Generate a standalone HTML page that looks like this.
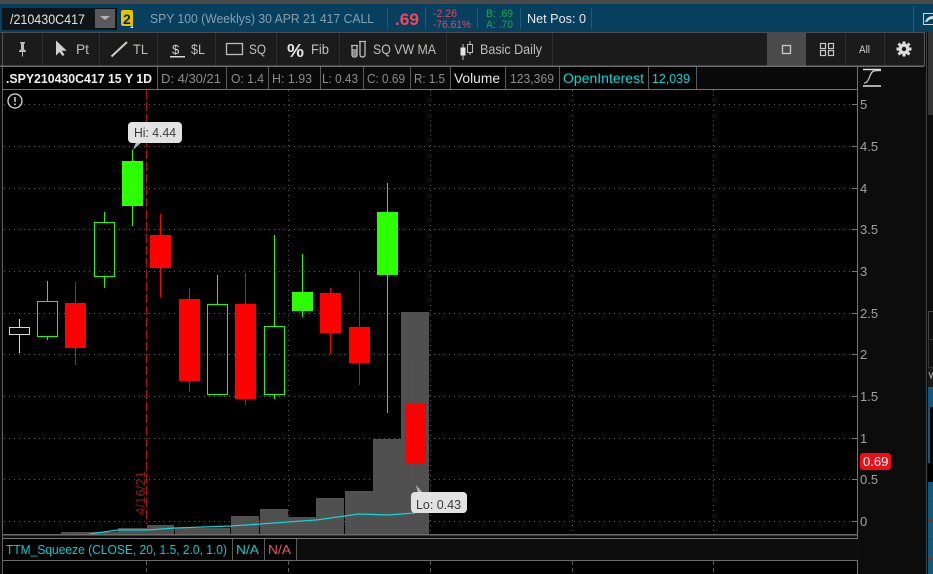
<!DOCTYPE html>
<html><head><meta charset="utf-8"><style>
html,body{margin:0;padding:0;background:#0c0c0c;width:933px;height:574px;overflow:hidden}
svg{display:block}
text{font-family:"Liberation Sans",sans-serif;font-size:12px}
</style></head><body>
<svg width="933" height="574" viewBox="0 0 933 574" xmlns="http://www.w3.org/2000/svg">
<rect width="933" height="574" fill="#0c0c0c"/>
<!-- top strip and blue bar -->
<rect width="933" height="4" fill="#4a4a4a"/>
<rect y="4" width="933" height="28" fill="#07405f"/>
<rect x="2" y="8" width="115" height="22" fill="#0e1418"/>
<text x="10" y="24" fill="#e2e2e2" style="font-size:13.500px" textLength="75" lengthAdjust="spacingAndGlyphs">/210430C417</text>
<rect x="95" y="9" width="20" height="19" fill="#5a5a5a"/>
<path d="M100 16h10l-5 4z" fill="#b5b5b5"/>
<rect x="121" y="10" width="12" height="16" rx="2" fill="#e3c400"/>
<text x="123" y="24" fill="#10202a" style="font-size:14px;font-weight:bold">2</text>
<path d="M130 28l3-3v3z" fill="#dcdcdc"/>
<text x="150" y="23" fill="#86a0b0" style="font-size:13px" textLength="224" lengthAdjust="spacingAndGlyphs">SPY 100 (Weeklys) 30 APR 21 417 CALL</text>
<g stroke="#1f5a7b" stroke-width="1"><path d="M387.500 8v21M425.500 8v21M477.500 8v21M520.500 8v21M591.500 8v21M913.500 6v26"/></g>
<text x="395" y="25" fill="#f0495b" style="font-size:17px;font-weight:bold" textLength="24" lengthAdjust="spacingAndGlyphs">.69</text>
<text x="433" y="17" fill="#e8445a" style="font-size:11px" textLength="24" lengthAdjust="spacingAndGlyphs">-2.26</text>
<text x="433" y="28" fill="#e8445a" style="font-size:11px" textLength="38" lengthAdjust="spacingAndGlyphs">-76.61%</text>
<text x="486" y="17" fill="#18a84a" style="font-size:11px" textLength="27" lengthAdjust="spacingAndGlyphs">B: .69</text>
<text x="486" y="28" fill="#18a84a" style="font-size:11px" textLength="27" lengthAdjust="spacingAndGlyphs">A: .70</text>
<text x="527" y="23" fill="#e8e8e8" style="font-size:13px" textLength="59" lengthAdjust="spacingAndGlyphs">Net Pos: 0</text>
<rect x="923.500" y="13.500" width="11" height="11" fill="none" stroke="#cfd8dd"/>
<path d="M925 22q2-6 8-6v3q-4 0-6 3z" fill="#cfd8dd"/>
<!-- toolbar -->
<rect x="0" y="32" width="924" height="34" fill="#1b1b1b"/>
<rect x="767" y="33" width="39" height="33" fill="#4b4b4b"/>
<path d="M0 32.500H924" stroke="#4c4c4c"/>
<path d="M2.500 32V66M924.500 32V66" stroke="#555"/>
<g stroke="#2e2e2e"><path d="M42.500 33V66M99.500 33V66M157.500 33V66M215.500 33V66M276.500 33V66M339.500 33V66M446.500 33V66M552.500 33V66M845.500 33V66M884.500 33V66"/></g>
<rect x="0" y="65.500" width="924" height="1.500" fill="#6d6d6d"/>
<!-- pin -->
<path d="M20 42h5v1l-1 1v5l2 2v1h-3v4l-.5 1-.5-1v-4h-3v-1l2-2v-5l-1-1z" fill="#bdbdbd"/>
<!-- arrow -->
<path d="M56 40.500v15l3.500-3.500 3 4 2-1.300-2.700-4h5z" fill="#cfcfcf"/>
<text x="76" y="54" fill="#bfbfbf" style="font-size:14px" textLength="13" lengthAdjust="spacingAndGlyphs">Pt</text>
<path d="M111.500 56.500L127 42" stroke="#cfcfcf" stroke-width="2"/>
<text x="133" y="54" fill="#bfbfbf" style="font-size:14px" textLength="15" lengthAdjust="spacingAndGlyphs">TL</text>
<text x="172" y="54" fill="#d0d0d0" style="font-size:13px">$</text>
<rect x="170" y="56" width="15" height="1.500" fill="#d8d8d8"/>
<text x="191" y="54" fill="#bfbfbf" style="font-size:14px" textLength="14" lengthAdjust="spacingAndGlyphs">$L</text>
<rect x="226.500" y="43.500" width="16" height="11" fill="none" stroke="#bdbdbd" stroke-width="1.300"/>
<text x="249" y="54" fill="#bfbfbf" style="font-size:14px" textLength="17" lengthAdjust="spacingAndGlyphs">SQ</text>
<text x="287" y="57" fill="#e6e6e6" style="font-size:18px;font-weight:bold" textLength="17" lengthAdjust="spacingAndGlyphs">%</text>
<text x="311" y="54" fill="#bfbfbf" style="font-size:14px" textLength="18" lengthAdjust="spacingAndGlyphs">Fib</text>
<!-- tubes -->
<g fill="none" stroke="#bdbdbd" stroke-width="1.300"><path d="M352 45.500v9q0 2.500 2.500 2.500t2.500-2.500v-9M351 45.500h7"/><path d="M360 41.500v13q0 2.500 2.500 2.500t2.500-2.500v-13M359 41.500h7"/></g>
<rect x="352.500" y="49" width="4" height="7" fill="#888"/>
<text x="373" y="54" fill="#bfbfbf" style="font-size:14px" textLength="63" lengthAdjust="spacingAndGlyphs">SQ VW MA</text>
<!-- basic candles -->
<path d="M463 44v16M470 41v14" stroke="#bdbdbd"/>
<rect x="460.500" y="47.500" width="5" height="8" fill="#e4e4e4"/>
<rect x="467.500" y="44.500" width="5" height="8" fill="#1b1b1b" stroke="#bdbdbd"/>
<text x="480" y="54" fill="#bfbfbf" style="font-size:14px" textLength="62" lengthAdjust="spacingAndGlyphs">Basic Daily</text>
<rect x="782.500" y="45.500" width="8" height="8" fill="none" stroke="#c8c8c8" stroke-width="1.300"/>
<g fill="none" stroke="#c8c8c8" stroke-width="1.200"><rect x="820.500" y="43.500" width="5" height="5"/><rect x="828.500" y="43.500" width="5" height="5"/><rect x="820.500" y="50.500" width="5" height="5"/><rect x="828.500" y="50.500" width="5" height="5"/></g>
<text x="859" y="53" fill="#cfcfcf" style="font-size:11px" textLength="11" lengthAdjust="spacingAndGlyphs">All</text>
<g fill="#dcdcdc"><circle cx="904" cy="49" r="5.500"/><path d="M902.500 41.500h3v4h-3zM902.500 52.500h3v4h-3zM896.500 47.500h4v3h-4zM907.500 47.500h4v3h-4z"/><path d="M897.500 44.500l2-2 3 3-2 2zM908.500 42.500l2 2-3 3-2-2zM899.500 55.500l-2-2 3-3 2 2zM910.500 53.500l-2 2-3-3 2-2z"/></g>
<circle cx="904" cy="49" r="2.200" fill="#1b1b1b"/>
<!-- info row -->
<rect x="3" y="67" width="855" height="22" fill="#0a0a0a"/>
<rect x="3" y="67" width="155" height="22" fill="#000"/>
<rect x="450" y="67" width="56" height="22" fill="#000"/>
<rect x="559" y="67" width="137" height="22" fill="#000"/>
<g stroke="#5a5a5a"><path d="M157.500 67V89M226.500 67V89M268.500 67V89M320.500 67V89M363.500 67V89M410.500 67V89M450.500 67V89M505.500 67V89M559.500 67V89M648.500 67V89M696.500 67V89"/></g>
<text x="6" y="83" fill="#f0f0f0" style="font-size:13px;font-weight:bold" textLength="146" lengthAdjust="spacingAndGlyphs">.SPY210430C417 15 Y 1D</text>
<g fill="#8c8c8c">
<text x="161" y="83" style="font-size:13px" textLength="60" lengthAdjust="spacingAndGlyphs">D: 4/30/21</text>
<text x="231" y="83" style="font-size:13px" textLength="33" lengthAdjust="spacingAndGlyphs">O: 1.4</text>
<text x="272" y="83" style="font-size:13px" textLength="40" lengthAdjust="spacingAndGlyphs">H: 1.93</text>
<text x="322" y="83" style="font-size:13px" textLength="36" lengthAdjust="spacingAndGlyphs">L: 0.43</text>
<text x="367" y="83" style="font-size:13px" textLength="38" lengthAdjust="spacingAndGlyphs">C: 0.69</text>
<text x="414" y="83" style="font-size:13px" textLength="31" lengthAdjust="spacingAndGlyphs">R: 1.5</text>
<text x="510" y="83" style="font-size:13px" textLength="44" lengthAdjust="spacingAndGlyphs">123,369</text>
</g>
<text x="454" y="83" fill="#e8e8e8" style="font-size:13.500px" textLength="46" lengthAdjust="spacingAndGlyphs">Volume</text>
<text x="563" y="83" fill="#00dcd8" style="font-size:13.500px" textLength="81" lengthAdjust="spacingAndGlyphs">OpenInterest</text>
<text x="652" y="83" fill="#00dcd8" style="font-size:13px" textLength="38" lengthAdjust="spacingAndGlyphs">12,039</text>
<!-- chart -->
<rect x="3" y="90" width="855" height="444" fill="#000"/>
<path d="M2.500 66V574" stroke="#606060"/>
<path d="M3 89.500H858" stroke="#747474"/>
<path d="M857.500 66V574" stroke="#747474"/>
<g stroke="#5a5a5a" stroke-dasharray="1 4"><path d="M4 104.500H852M4 146.500H852M4 188.500H852M4 229.500H852M4 271.500H852M4 313.500H852M4 354.500H852M4 396.500H852M4 438.500H852M4 479.500H852M4 521.500H852"/>
<path d="M288.500 90V534M430.500 90V534M572.500 90V534M713.500 90V534"/></g>
<g stroke="#747474"><path d="M852 104.500h5M852 146.500h5M852 188.500h5M852 229.500h5M852 271.500h5M852 313.500h5M852 354.500h5M852 396.500h5M852 438.500h5M852 479.500h5M852 521.500h5"/></g>
<!-- volume -->
<g fill="#505050">
<rect x="61" y="532" width="28" height="2"/><rect x="89" y="532" width="29" height="2"/><rect x="118" y="528" width="29" height="6"/><rect x="147" y="525" width="27" height="9"/><rect x="175" y="528" width="28" height="6"/><rect x="203" y="528" width="27" height="6"/><rect x="231" y="516" width="28" height="18"/><rect x="260" y="509" width="28" height="25"/><rect x="288" y="517" width="28" height="17"/><rect x="316" y="498" width="28" height="36"/><rect x="345" y="491" width="28" height="43"/><rect x="373" y="439" width="28" height="95"/><rect x="401" y="312" width="28" height="222"/>
</g>
<!-- red dashed date line -->
<path d="M146.500 90V524" stroke="#b3141e" stroke-width="1" stroke-dasharray="9 3"/>
<text transform="translate(145 515) rotate(-90)" fill="#8a1a1f" style="font-size:13px" textLength="44" lengthAdjust="spacingAndGlyphs">4/16/21</text>
<!-- candles -->
<g stroke="#d8d8d8" fill="none"><path d="M19.500 319V327M19.500 335V353"/><rect x="9.500" y="327.500" width="20" height="7"/></g>
<g stroke="#19ff00" fill="none"><path d="M47.500 281V301M47.500 337V340"/><rect x="37.500" y="301.500" width="20" height="35"/>
<path d="M104.500 212V222M104.500 277V288"/><rect x="94.500" y="222.500" width="20" height="54"/>
<path d="M132.500 150V161M132.500 206V226M217.500 275V304M274.500 235V326M274.500 395V399M302.500 254V317M387.500 183V413"/>
<rect x="207.500" y="304.500" width="20" height="90"/><rect x="264.500" y="326.500" width="20" height="68"/></g>
<g stroke="#ff0000" fill="none"><path d="M75.500 282V365M160.500 214V297M189.500 288V392M245.500 273V405M330.500 288V354M359.500 272V385M415.500 360V484"/></g>
<g fill="#ff0000">
<rect x="65" y="303" width="21" height="45"/><rect x="150" y="235" width="21" height="33"/><rect x="179" y="299" width="21" height="82"/><rect x="235" y="304" width="21" height="95"/><rect x="320" y="293" width="21" height="40"/><rect x="349" y="327" width="21" height="36"/><rect x="405" y="403" width="21" height="60"/>
</g>
<g fill="#2bff00">
<rect x="122" y="161" width="21" height="45"/><rect x="292" y="292" width="21" height="19"/><rect x="377" y="212" width="21" height="63"/>
</g>
<!-- cyan MA -->
<polyline points="89,534 118,530 147,530 175,528 203,527 231,526 260,524 288,522 316,520 345,516 359,514 388,515 415,513" fill="none" stroke="#11d6d6" stroke-width="1.300"/>
<!-- bottom lines -->
<rect x="3" y="534" width="855" height="1.500" fill="#6a6a6a"/>
<rect x="3" y="538" width="855" height="22" fill="#0d0d0d"/>
<rect x="3" y="539" width="293" height="21" fill="#000"/>
<rect x="3" y="538" width="855" height="1" fill="#777"/>
<rect x="3" y="560" width="855" height="1" fill="#6a6a6a"/>
<g stroke="#5a5a5a"><path d="M232.500 539V560M264.500 539V560M296.500 539V560"/></g>
<text x="6" y="554" fill="#00cfd0" style="font-size:13px" textLength="221" lengthAdjust="spacingAndGlyphs">TTM_Squeeze (CLOSE, 20, 1.5, 2.0, 1.0)</text>
<text x="236" y="554" fill="#00cfd0" style="font-size:13px" textLength="23" lengthAdjust="spacingAndGlyphs">N/A</text>
<text x="268" y="554" fill="#e4555f" style="font-size:13px" textLength="23" lengthAdjust="spacingAndGlyphs">N/A</text>
<rect x="3" y="561" width="854" height="13" fill="#000"/>
<g stroke="#5a5a5a" stroke-dasharray="4 3"><path d="M146.500 561V574M288.500 561V574M430.500 561V574M572.500 561V574M713.500 561V574"/></g>
<!-- exclamation -->
<circle cx="15" cy="101" r="7" fill="none" stroke="#d8d8d8" stroke-width="1.300"/>
<path d="M15 97v5M15 103.500v1.500" stroke="#d8d8d8" stroke-width="1.500"/>
<!-- tooltips -->
<path d="M133 150l3-8h6z" fill="#b5b5b5"/>
<rect x="128" y="122" width="54" height="21" rx="4" fill="#e2e2e2"/>
<text x="134" y="137" fill="#3a3a3a" style="font-size:13px" textLength="42" lengthAdjust="spacingAndGlyphs">Hi: 4.44</text>
<path d="M416 485l7 8h-5z" fill="#b5b5b5"/>
<rect x="411" y="492" width="56" height="21" rx="4" fill="#e2e2e2"/>
<text x="416" y="509" fill="#3a3a3a" style="font-size:13px" textLength="45" lengthAdjust="spacingAndGlyphs">Lo: 0.43</text>
<!-- axis -->
<g fill="#a0a0a0">
<text x="860" y="109" style="font-size:13px">5</text><text x="860" y="151" style="font-size:13px">4.5</text><text x="860" y="193" style="font-size:13px">4</text><text x="860" y="234" style="font-size:13px">3.5</text><text x="860" y="276" style="font-size:13px">3</text><text x="860" y="318" style="font-size:13px">2.5</text><text x="860" y="359" style="font-size:13px">2</text><text x="860" y="401" style="font-size:13px">1.5</text><text x="860" y="443" style="font-size:13px">1</text><text x="860" y="484" style="font-size:13px">0.5</text><text x="860" y="526" style="font-size:13px">0</text>
</g>
<rect x="860" y="453" width="31" height="17" rx="3" fill="#f20d14"/>
<text x="863" y="466" fill="#fff" style="font-size:13px">0.69</text>
<!-- study icon -->
<path d="M863 69.500h18M863 86h18" stroke="#e0e0e0" stroke-width="1.500"/>
<path d="M864 84c6 0 5-11 10-12 2-.5 5-.5 7-.5" fill="none" stroke="#d0d0d0" stroke-width="1.200" transform="translate(0,-1)"/>
<!-- right strip -->
<path d="M926.500 32V574" stroke="#404040"/>
<rect x="928" y="32" width="5" height="83" fill="#333"/>
<rect x="928.500" y="311.500" width="6" height="28" fill="#111" stroke="#444"/>
<rect x="928.500" y="339.500" width="6" height="28" fill="#111" stroke="#333"/>
<rect x="928" y="368" width="5" height="19" fill="#1a1a1a"/>
<path d="M929 372l2 6 2-6" fill="none" stroke="#aaa"/>
<rect x="928" y="387" width="5" height="76" fill="#0d5a80"/>
<rect x="930" y="407" width="3" height="56" fill="#000"/>
<rect x="928" y="463" width="5" height="19" fill="#000"/>
<rect x="928" y="482" width="5" height="92" fill="#0d5a80"/>
<path d="M928 501.500h5M928 520.500h5M928 539.500h5M928 558.500h5" stroke="#7a2a2a"/>
</svg>
</body></html>
